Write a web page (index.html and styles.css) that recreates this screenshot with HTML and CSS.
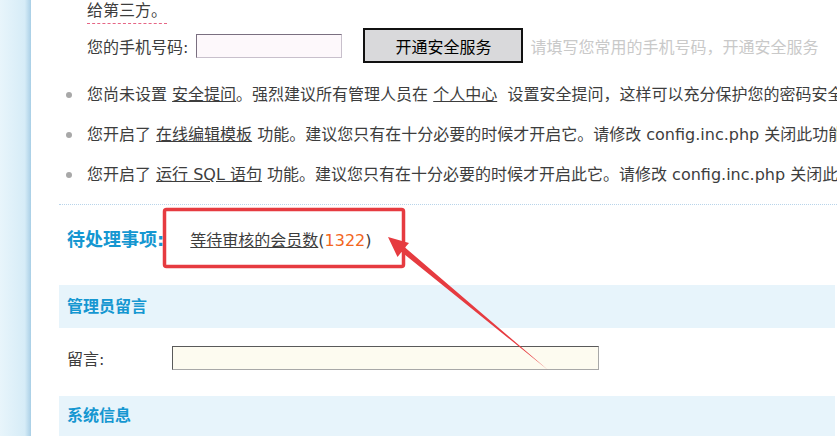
FILE: index.html
```html
<!DOCTYPE html>
<html lang="zh-CN">
<head>
  <meta charset="UTF-8">
  <title>管理中心首页</title>
  <link rel="stylesheet" href="styles.css">
</head>
<body>

<div class="page">
  <div class="side"></div>

  <div class="main">
    <div class="notice">
      <p class="note-end"><span>给第三方。</span></p>
      <div class="phone-row">
        <label>您的手机号码:</label>
        <input type="text" class="phone">
        <button class="open-btn">开通安全服务</button>
        <span class="hint">请填写您常用的手机号码，开通安全服务</span>
      </div>
    </div>

    <ul class="tips">
      <li>您尚未设置 <a href="#">安全提问</a>。强烈建议所有管理人员在 <a href="#">个人中心</a>&nbsp; 设置安全提问，这样可以充分保护您的密码安全。</li>
      <li>您开启了 <a href="#">在线编辑模板</a> 功能。建议您只有在十分必要的时候才开启它。请修改 config.inc.php 关闭此功能。</li>
      <li>您开启了 <a href="#">运行 SQL 语句</a> 功能。建议您只有在十分必要的时候才开启此它。请修改 config.inc.php 关闭此功能。</li>
    </ul>

    <div class="pending">
      <h3>待处理事项:</h3>
      <a href="#" class="wait-link">等待审核的会员数</a>(<span class="count">1322</span>)
    </div>

    <div class="sec-head">管理员留言</div>
    <div class="msg-row">
      <label>留言:</label>
      <input type="text" class="msg">
    </div>

    <div class="sec-head sec-last">系统信息</div>
  </div>
</div>

<!-- annotation drawn over the screenshot -->
<svg class="mark" width="837" height="436" viewBox="0 0 837 436">
  <rect x="164.5" y="209.5" width="239" height="57" rx="2" fill="none" stroke="#e63b40" stroke-width="3.5"/>
  <polygon points="388,237 409,243 405,247.5 548,370 401.5,252 397.5,257" fill="#e63b40"/>
</svg>

</body>
</html>
```

FILE: styles.css
```css
body {
  margin: 0;
  background: #fff;
  color: #3d3d3d;
  font-family: "DejaVu Sans", "Noto Sans CJK SC", sans-serif;
  font-size: 16px;
  overflow: hidden;
}
.page {
  display: flex;
  height: 436px;
  width: 837px;
  overflow: hidden;
}
.side {
  width: 31px;
  flex: none;
  background: linear-gradient(to right, #e8f5fb, #d6ecf7 80%, #a9cfe6);
}
.main {
  flex: 1;
  padding-left: 28px;
  white-space: nowrap;
  min-width: 0;
}
.notice {
  padding-left: 28px;
}
.note-end {
  margin: 0;
  line-height: 22px;
}
.note-end span {
  display: inline-block;
  padding-bottom: 1px;
  border-bottom: 1px dashed #e66585;
}
.phone-row {
  display: flex;
  align-items: center;
  height: 35px;
  margin-top: 4px;
}
.phone {
  width: 146px;
  height: 24px;
  box-sizing: border-box;
  margin: 0 0 0 8px;
  background: #fdf8fb;
  border: 1px solid;
  border-color: #7a6f80 #c8c0cc #c8c0cc #7a6f80;
}
.open-btn {
  margin-left: 21px;
  width: 160px;
  height: 35px;
  background: #d9d9db;
  border: 2px solid #111;
  color: #000;
  font-family: inherit;
  font-size: 16px;
  padding: 0;
}
.hint {
  margin-left: 7px;
  color: #c9c9c9;
}
.tips {
  list-style: none;
  margin: 12px 0 0;
  padding: 0 0 9px;
}
.tips li {
  position: relative;
  line-height: 40px;
  padding-left: 28px;
}
.tips li::before {
  content: "";
  position: absolute;
  left: 7px;
  top: 17px;
  width: 6px;
  height: 6px;
  border-radius: 50%;
  background: #a8a8a8;
}
.tips a, .wait-link {
  color: #3d3d3d;
  text-decoration: underline;
}
.pending {
  border-top: 1px dotted #b8d4ea;
  padding: 23px 0 32px 8px;
  line-height: 24px;
}
.pending h3 {
  display: inline;
  margin: 0;
  font-size: 18px;
  color: #1597d1;
}
.wait-link {
  margin-left: 21px;
}
.count {
  color: #f2661d;
}
.sec-head {
  background: #e7f4fb;
  height: 43px;
  line-height: 43px;
  padding-left: 8px;
  margin-right: 2px;
  color: #1597d1;
  font-weight: bold;
}
.sec-last {
  height: 60px;
  line-height: 40px;
}
.msg-row {
  display: flex;
  align-items: center;
  padding: 18px 0 26px 8px;
}
.msg-row label {
  width: 105px;
}
.msg {
  width: 427px;
  height: 24px;
  box-sizing: border-box;
  margin: 0;
  background: #fdfbf0;
  border: 1px solid;
  border-color: #5a5a5a #a8a8a8 #a8a8a8 #5a5a5a;
}
.mark {
  position: absolute;
  left: 0;
  top: 0;
  pointer-events: none;
}
```
